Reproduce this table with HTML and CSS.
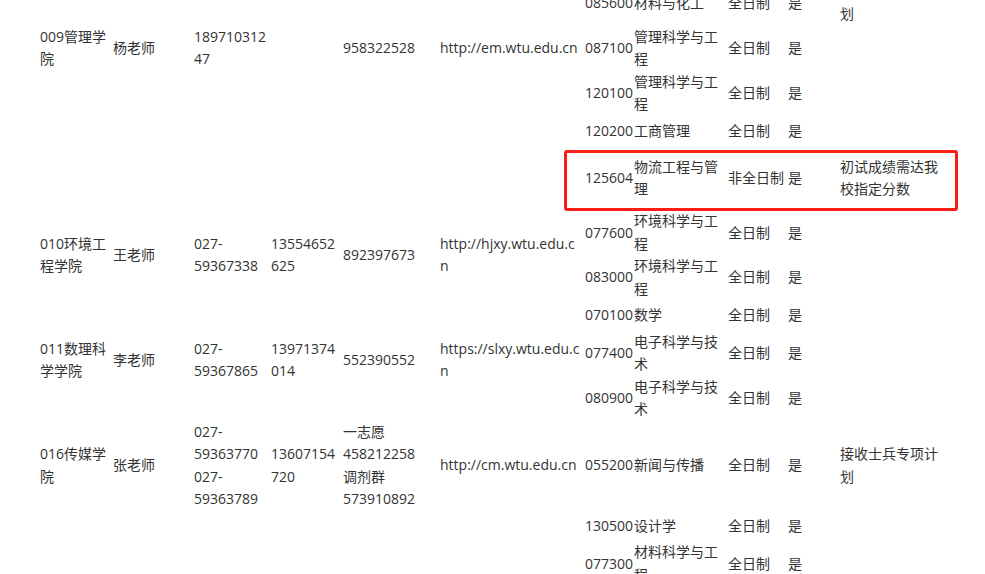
FILE: index.html
```html
<!DOCTYPE html>
<html lang="zh-CN">
<head>
<meta charset="utf-8">
<title>招生信息</title>
<link rel="stylesheet" href="styles.css">
</head>
<body>
<div class="page">
  <table class="info">
    <colgroup>
      <col class="c-college"><col class="c-teacher"><col class="c-phone"><col class="c-mobile"><col class="c-qq"><col class="c-url"><col class="c-code"><col class="c-major"><col class="c-mode"><col class="c-yes"><col class="c-note">
    </colgroup>
    <tbody>
      <tr>
        <td rowspan="5">009管理学院</td>
        <td rowspan="5">杨老师</td>
        <td rowspan="5">18971031247</td>
        <td rowspan="5" class="pr"></td>
        <td rowspan="5">958322528</td>
        <td rowspan="5" class="url">http://em.wtu.edu.cn</td>
        <td class="code">025100</td><td>金融</td><td>全日制</td><td>是</td><td></td>
      </tr>
      <tr class="auto">
        <td class="code">085600</td><td>材料与化工</td><td>全日制</td><td>是</td><td>接收士兵专项计划</td>
      </tr>
      <tr class="auto">
        <td class="code">087100</td><td>管理科学与工程</td><td>全日制</td><td>是</td><td></td>
      </tr>
      <tr class="auto">
        <td class="code">120100</td><td>管理科学与工程</td><td>全日制</td><td>是</td><td></td>
      </tr>
      <tr>
        <td class="code">120200</td><td>工商管理</td><td>全日制</td><td>是</td><td></td>
      </tr>
      <tr class="tall">
        <td></td><td></td><td></td><td class="pr"></td><td></td><td class="url"></td>
        <td class="code">125604</td><td>物流工程与管理</td><td>非全日制</td><td>是</td><td>初试成绩需达我校指定分数</td>
      </tr>
      <tr class="auto">
        <td rowspan="2">010环境工程学院</td>
        <td rowspan="2">王老师</td>
        <td rowspan="2">027-<wbr>59367338</td>
        <td rowspan="2" class="pr">13554652625</td>
        <td rowspan="2">892397673</td>
        <td rowspan="2" class="url">http://hjxy.wtu.edu.cn</td>
        <td class="code">077600</td><td>环境科学与工程</td><td>全日制</td><td>是</td><td></td>
      </tr>
      <tr class="auto">
        <td class="code">083000</td><td>环境科学与工程</td><td>全日制</td><td>是</td><td></td>
      </tr>
      <tr>
        <td rowspan="3">011数理科学学院</td>
        <td rowspan="3">李老师</td>
        <td rowspan="3">027-<wbr>59367865</td>
        <td rowspan="3" class="pr">13971374014</td>
        <td rowspan="3">552390552</td>
        <td rowspan="3" class="url">https://slxy.wtu.edu.cn</td>
        <td class="code">070100</td><td>数学</td><td>全日制</td><td>是</td><td></td>
      </tr>
      <tr class="auto">
        <td class="code">077400</td><td>电子科学与技术</td><td>全日制</td><td>是</td><td></td>
      </tr>
      <tr class="auto">
        <td class="code">080900</td><td>电子科学与技术</td><td>全日制</td><td>是</td><td></td>
      </tr>
      <tr class="auto">
        <td>016传媒学院</td>
        <td>张老师</td>
        <td>027-<wbr>59363770<br>027-<wbr>59363789</td>
        <td class="pr">13607154720</td>
        <td>一志愿<br>458212258<br>调剂群<br>573910892</td>
        <td class="url">http://cm.wtu.edu.cn</td>
        <td class="code">055200</td><td>新闻与传播</td><td>全日制</td><td>是</td><td>接收士兵专项计划</td>
      </tr>
      <tr>
        <td rowspan="2"></td><td rowspan="2"></td><td rowspan="2"></td><td rowspan="2" class="pr"></td><td rowspan="2"></td><td rowspan="2" class="url"></td>
        <td class="code">130500</td><td>设计学</td><td>全日制</td><td>是</td><td></td>
      </tr>
      <tr class="auto">
        <td class="code">077300</td><td>材料科学与工程</td><td>全日制</td><td>是</td><td></td>
      </tr>
    </tbody>
  </table>
  <div class="mark"></div>
</div>
</body>
</html>
```
FILE: styles.css
```css
html, body {
  margin: 0;
  padding: 0;
  background: #fff;
}
body {
  font-family: "Open Sans", "Noto Sans CJK SC", sans-serif;
  font-size: 14px;
  line-height: 22.4px;
  color: #333;
  overflow: hidden;
}
.page {
  position: relative;
  width: 985px;
  height: 574px;
  overflow: hidden;
}
.info {
  table-layout: fixed;
  border-collapse: collapse;
  margin: -50px 0 0 40px;
  width: 903px;
}
.info td {
  padding: 0;
  vertical-align: middle;
  text-align: left;
  overflow-wrap: anywhere;
}
.info tr { height: 31px; }
.info tr.auto { height: auto; }
.info tr.tall { height: 64px; }
.c-college { width: 73px; }
.c-teacher { width: 81px; }
.c-phone { width: 77px; }
.c-mobile { width: 72px; }
.c-qq { width: 97px; }
.c-url { width: 145px; }
.c-code { width: 49px; }
.c-major { width: 94px; }
.c-mode { width: 60px; }
.c-yes { width: 52px; }
.c-note { width: 103px; }
.info td.pr { padding-right: 4px; }
.info td.url {
  padding-right: 4px;
  word-break: break-all;
}
.info td.code { white-space: nowrap; }
.mark {
  position: absolute;
  left: 564px;
  top: 150px;
  width: 388px;
  height: 55px;
  border: 3px solid #fa1e19;
  border-radius: 3px;
}
```
